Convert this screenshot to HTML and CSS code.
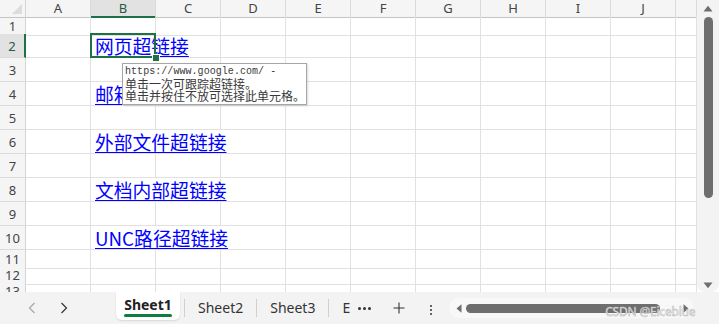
FILE: index.html
```html
<!DOCTYPE html>
<html>
<head>
<meta charset="utf-8">
<link rel="stylesheet" href="styles.css">
</head>
<body>
<div class="app">
  <div class="main">
    <div class="grid">
      <div class="r hdr">
        <div class="corner"></div>
        <div class="ch">A</div><div class="ch sel">B</div><div class="ch">C</div><div class="ch">D</div><div class="ch">E</div>
        <div class="ch">F</div><div class="ch">G</div><div class="ch">H</div><div class="ch">I</div><div class="ch">J</div><div class="ch"></div>
      </div>
      <div class="r h16">
        <div class="rh">1</div>
        <div class="c"></div><div class="c"></div><div class="c"></div><div class="c"></div><div class="c"></div>
        <div class="c"></div><div class="c"></div><div class="c"></div><div class="c"></div><div class="c"></div><div class="c"></div>
      </div>
      <div class="r h24">
        <div class="rh sel">2</div>
        <div class="c"></div><div class="c link s2"><span>网页超链接</span></div><div class="c"></div><div class="c"></div>
        <div class="c"></div><div class="c"></div><div class="c"></div><div class="c"></div><div class="c"></div><div class="c"></div>
      </div>
      <div class="r h24">
        <div class="rh">3</div>
        <div class="c"></div><div class="c"></div><div class="c"></div><div class="c"></div><div class="c"></div>
        <div class="c"></div><div class="c"></div><div class="c"></div><div class="c"></div><div class="c"></div><div class="c"></div>
      </div>
      <div class="r h24">
        <div class="rh">4</div>
        <div class="c"></div><div class="c link s2"><span>邮箱超链接</span></div><div class="c"></div><div class="c"></div>
        <div class="c"></div><div class="c"></div><div class="c"></div><div class="c"></div><div class="c"></div><div class="c"></div>
      </div>
      <div class="r h24">
        <div class="rh">5</div>
        <div class="c"></div><div class="c"></div><div class="c"></div><div class="c"></div><div class="c"></div>
        <div class="c"></div><div class="c"></div><div class="c"></div><div class="c"></div><div class="c"></div><div class="c"></div>
      </div>
      <div class="r h24">
        <div class="rh">6</div>
        <div class="c"></div><div class="c link s3"><span>外部文件超链接</span></div><div class="c"></div>
        <div class="c"></div><div class="c"></div><div class="c"></div><div class="c"></div><div class="c"></div><div class="c"></div>
      </div>
      <div class="r h24">
        <div class="rh">7</div>
        <div class="c"></div><div class="c"></div><div class="c"></div><div class="c"></div><div class="c"></div>
        <div class="c"></div><div class="c"></div><div class="c"></div><div class="c"></div><div class="c"></div><div class="c"></div>
      </div>
      <div class="r h24">
        <div class="rh">8</div>
        <div class="c"></div><div class="c link s2"><span>文档内部超链接</span></div><div class="c"></div><div class="c"></div>
        <div class="c"></div><div class="c"></div><div class="c"></div><div class="c"></div><div class="c"></div><div class="c"></div>
      </div>
      <div class="r h24">
        <div class="rh">9</div>
        <div class="c"></div><div class="c"></div><div class="c"></div><div class="c"></div><div class="c"></div>
        <div class="c"></div><div class="c"></div><div class="c"></div><div class="c"></div><div class="c"></div><div class="c"></div>
      </div>
      <div class="r h24">
        <div class="rh">10</div>
        <div class="c"></div><div class="c link s3"><span>UNC路径超链接</span></div><div class="c"></div>
        <div class="c"></div><div class="c"></div><div class="c"></div><div class="c"></div><div class="c"></div><div class="c"></div>
      </div>
      <div class="r h16">
        <div class="rh">11</div>
        <div class="c"></div><div class="c"></div><div class="c"></div><div class="c"></div><div class="c"></div>
        <div class="c"></div><div class="c"></div><div class="c"></div><div class="c"></div><div class="c"></div><div class="c"></div>
      </div>
      <div class="r h16">
        <div class="rh">12</div>
        <div class="c"></div><div class="c"></div><div class="c"></div><div class="c"></div><div class="c"></div>
        <div class="c"></div><div class="c"></div><div class="c"></div><div class="c"></div><div class="c"></div><div class="c"></div>
      </div>
      <div class="r h16">
        <div class="rh">13</div>
        <div class="c"></div><div class="c"></div><div class="c"></div><div class="c"></div><div class="c"></div>
        <div class="c"></div><div class="c"></div><div class="c"></div><div class="c"></div><div class="c"></div><div class="c"></div>
      </div>

      <div class="selbox"><i class="handle"></i></div>
      <div class="tip">
        <div class="tip-url">https://www.google.com/ -</div>
        <div class="tip-cn">单击一次可跟踪超链接。</div>
        <div class="tip-cn">单击并按住不放可选择此单元格。</div>
      </div>
    </div>
    <div class="vscroll">
      <svg class="varrow" width="10" height="7" viewBox="0 0 10 7"><path d="M0.5 6.5 L5 0.8 L9.5 6.5 Z" fill="#6e6e6e"/></svg>
      <div class="vthumb"></div>
      <div class="vfill"></div>
      <svg class="varrow" width="10" height="7" viewBox="0 0 10 7"><path d="M0.5 0.5 L5 6.2 L9.5 0.5 Z" fill="#6e6e6e"/></svg>
    </div>
  </div>
  <div class="tabbar">
    <div class="nav">
      <svg class="chev" width="8" height="12" viewBox="0 0 8 12"><path d="M6.5 1 L1.5 6 L6.5 11" fill="none" stroke="#a8a8a8" stroke-width="1.2"/></svg>
      <svg class="chev" width="8" height="12" viewBox="0 0 8 12"><path d="M1.5 1 L6.5 6 L1.5 11" fill="none" stroke="#333" stroke-width="1.2"/></svg>
    </div>
    <div class="tab active"><span>Sheet1</span></div>
    <span class="sep sep1"></span>
    <div class="tab">Sheet2</div>
    <span class="sep"></span>
    <div class="tab">Sheet3</div>
    <span class="sep"></span>
    <div class="tab trunc">E</div>
    <span class="more"><i></i><i></i><i></i></span>
    <svg class="add" width="12" height="12" viewBox="0 0 12 12"><path d="M6 0.5 V11.5 M0.5 6 H11.5" stroke="#333" stroke-width="1.1"/></svg>
    <span class="kebab"><i></i><i></i><i></i></span>
    <div class="hscroll">
      <svg width="6" height="9" viewBox="0 0 6 9"><path d="M5.5 0.3 L0.5 4.5 L5.5 8.7 Z" fill="#6e6e6e"/></svg>
      <div class="hthumb"></div>
      <svg width="6" height="9" viewBox="0 0 6 9"><path d="M0.5 0.3 L5.5 4.5 L0.5 8.7 Z" fill="#6e6e6e"/></svg>
      <span class="wm">CSDN @Eiceblue</span>
    </div>
  </div>
</div>
</body>
</html>
```

FILE: styles.css
```css
* { box-sizing: border-box; margin: 0; padding: 0; }
html, body { width: 719px; height: 324px; overflow: hidden; background: #ffffff; }
body { font-family: "Noto Sans", "Segoe UI", sans-serif; color: #333; }

.app { width: 719px; height: 324px; display: flex; flex-direction: column; }
.main { height: 292px; display: flex; overflow: hidden; }

.grid { position: relative; width: 697px; height: 292px; overflow: hidden; background: #fff; }

.r { display: grid; grid-template-columns: 26px repeat(10, 65px) 21px; }
.hdr { height: 17px; }
.h16 { height: 17px; }
.h24 { height: 24px; }
.r.h16:nth-child(n+12) { height: 16px; }

.corner { background: #f5f5f5; border-right: 1px solid #d4d4d4; border-bottom: 1px solid #c4c4c4; position: relative; }
.corner::after { content: ""; position: absolute; right: 3px; bottom: 3px; width: 0; height: 0;
  border-left: 10px solid transparent; border-bottom: 10px solid #dcdcdc; }

.ch { background: #f5f5f5; border-right: 1px solid #dadada; border-bottom: 1px solid #c4c4c4;
  font-size: 13px; line-height: 16px; text-align: center; color: #444; }
.ch.sel { background: #e2e2e2; border-bottom: 2px solid #1e7145; color: #285c40; }

.rh { background: #f5f5f5; border-right: 1px solid #d4d4d4; border-bottom: 1px solid #dadada;
  font-size: 13px; display: flex; align-items: center; justify-content: center; color: #444; }
.rh.sel { background: #e2e2e2; border-right: 2px solid #1e7145; color: #285c40; }

.c { border-right: 1px solid #e1e1e1; border-bottom: 1px solid #e1e1e1; min-width: 0; }
.link { display: flex; align-items: center; padding-left: 4px; padding-top: 1px; white-space: nowrap; overflow: visible; }
.link span { font-family: "Noto Sans CJK SC", "Noto Sans", sans-serif; font-size: 18.8px; line-height: 1;
  color: #0000ff; text-decoration: underline; text-underline-offset: 2px; text-decoration-thickness: 1px; }
.s2 { grid-column: span 2; }
.s3 { grid-column: span 3; }

.selbox { position: absolute; left: 90px; top: 33px; width: 66px; height: 25px; border: 2px solid #1e7145; }
.handle { position: absolute; right: -5px; bottom: -5px; width: 6px; height: 6px; background: #1e7145; outline: 1px solid #fff; }

.tip { position: absolute; left: 122px; top: 63px; width: 185px; height: 42px; background: #fff;
  border: 1px solid #a6a6a6; box-shadow: 1px 1px 2px rgba(0,0,0,0.15); padding: 2px 0 0 2px; color: #3a3a3a; }
.tip-url { font-family: "Liberation Mono", monospace; font-size: 10px; line-height: 12px; letter-spacing: 0.05px; }
.tip-cn { font-family: "Noto Sans CJK SC", sans-serif; font-size: 12px; line-height: 12px; }

.vscroll { width: 22px; height: 292px; background: #f3f3f3; border-radius: 0 0 8px 8px;
  display: flex; flex-direction: column; align-items: center; padding: 5px 0 3px; }
.varrow { flex: none; }
.vthumb { width: 9px; height: 181px; background: #6e6e6e; border-radius: 5px; margin-top: 5px; margin-left: 0px; }
.vfill { flex: 1; }

.tabbar { height: 32px; background: #f3f3f3; display: flex; align-items: center; position: relative; }
.nav { width: 116px; display: flex; align-items: center; padding-left: 28px; gap: 24px; }
.chev { display: block; }
.tab { font-size: 14px; padding: 0 13px; color: #333; line-height: 20px; white-space: nowrap; }
.tab.active { align-self: flex-start; height: 28px; width: 64px; background: #fff; border-radius: 0 0 6px 6px;
  box-shadow: 0 1px 2px rgba(0,0,0,0.12); padding: 0; display: flex; justify-content: center; position: relative;
  font-weight: 700; color: #222; padding-top: 3px; }
.tab.active::after { content: ""; position: absolute; left: 8px; right: 8px; bottom: 3px; height: 3px; background: #107c41; border-radius: 2px; }
.sep { width: 1px; height: 18px; background: #d0d0d0; }
.sep1 { margin-left: 4px; }
.tab.trunc { padding-right: 0; }
.more { display: flex; gap: 2px; margin-left: 8px; width: 16px; }
.more i { width: 3px; height: 3px; background: #333; border-radius: 50%; }
.add { margin-left: 19px; }
.kebab { display: flex; flex-direction: column; gap: 2px; margin-left: 25px; width: 3px; margin-top: 4px; }
.kebab i { width: 2px; height: 2px; background: #333; border-radius: 50%; }
.hscroll { position: relative; margin-left: 16px; width: 245px; height: 20px; background: #f8f8f8; border-radius: 10px;
  display: flex; align-items: center; padding: 0 5px 0 7px; gap: 4px; }
.hthumb { width: 194px; height: 9px; background: #6e6e6e; border-radius: 5px; margin-right: 19px; }
.wm { position: absolute; left: 156px; top: 5px; font-family: "Noto Sans", sans-serif; font-size: 12px; color: #fff;
  -webkit-text-stroke: 0.5px #b0b0b0; white-space: nowrap; letter-spacing: -0.2px; }
```
